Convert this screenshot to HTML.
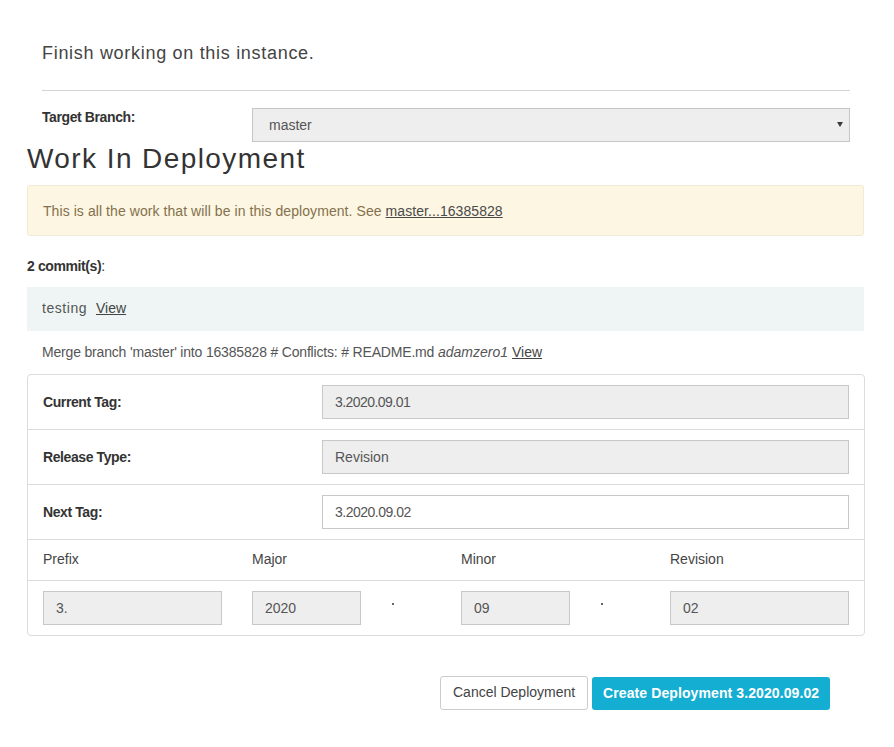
<!DOCTYPE html>
<html>
<head>
<meta charset="utf-8">
<style>
html,body{margin:0;padding:0;background:#fff;}
body{width:894px;height:747px;position:relative;overflow:hidden;font-family:"Liberation Sans",sans-serif;color:#333;}
.a{position:absolute;white-space:nowrap;}
.t14{font-size:14px;}
.lead{left:42px;top:43px;font-size:18px;color:#444;letter-spacing:0.7px;}
.hr{left:42px;top:90px;width:808px;height:1px;background:#d4d4d4;}
.lbl{font-size:14px;font-weight:bold;color:#333;letter-spacing:-0.4px;}
.sel{left:252px;top:108px;width:596px;height:32px;border:1px solid #c6c6c6;background:#eee;}
.sel span{position:absolute;left:16px;top:8px;font-size:14px;color:#555;}
.arrow{left:837px;top:122px;width:0;height:0;border-left:3px solid transparent;border-right:3px solid transparent;border-top:5px solid #3a3a3a;}
.h2{left:27px;top:143px;font-size:28px;color:#333;letter-spacing:1.42px;}
.alert{left:27px;top:185px;width:835px;height:49px;border:1px solid #f1ead6;background:#fdf6e3;border-radius:3px;}
.alert span{position:absolute;left:15px;top:17px;font-size:14px;color:#84714c;letter-spacing:0.07px;}
.alert a{color:#4a4a4a;text-decoration:underline;}
.c1{left:27px;top:287px;width:837px;height:44px;background:#eef5f4;}
a.v{color:#444;text-decoration:underline;}
.g{color:#555;font-size:14px;}
.panel{left:27px;top:374px;width:836px;height:260px;border:1px solid #dcdcdc;border-radius:4px;}
.rowl{left:28px;width:836px;height:1px;background:#dcdcdc;}
.inp{border:1px solid #c8c8c8;background:#eee;height:34px;box-sizing:border-box;}
.inp span{position:absolute;left:12px;top:8px;font-size:14px;color:#555;}
.hd{font-size:14px;color:#444;top:551px;}
.dot{width:2px;height:2px;background:#666;top:603px;}
.btn1{left:440px;top:676px;width:146px;height:32px;border:1px solid #ccc;border-radius:3px;background:#fff;}
.btn1 span{position:absolute;left:12px;top:7px;font-size:14px;color:#444;}
.btn2{left:592px;top:677px;width:238px;height:33px;border-radius:3px;background:#15aed3;}
.btn2 span{position:absolute;left:11px;top:8px;font-size:14px;font-weight:bold;color:#fff;letter-spacing:0.1px;}
</style>
</head>
<body>
<div class="a lead">Finish working on this instance.</div>
<div class="a hr"></div>
<div class="a lbl" style="left:42px;top:109px;">Target Branch:</div>
<div class="a sel"><span>master</span></div>
<div class="a arrow"></div>
<div class="a h2">Work In Deployment</div>
<div class="a alert"><span>This is all the work that will be in this deployment. See <a>master...16385828</a></span></div>
<div class="a lbl" style="left:27px;top:258px;">2 commit(s)<span style="font-weight:normal">:</span></div>
<div class="a c1"></div>
<div class="a g" style="left:42px;top:300px;letter-spacing:0.55px;">testing</div>
<div class="a g" style="left:96px;top:300px;"><a class="v">View</a></div>
<div class="a g" style="left:42px;top:344px;letter-spacing:-0.18px;">Merge branch 'master' into 16385828 # Conflicts: # README.md</div>
<div class="a g" style="left:438px;top:344px;"><i>adamzero1</i></div>
<div class="a g" style="left:512px;top:344px;"><a class="v">View</a></div>

<div class="a panel"></div>
<div class="a rowl" style="top:429px"></div>
<div class="a rowl" style="top:484px"></div>
<div class="a rowl" style="top:539px"></div>
<div class="a rowl" style="top:580px"></div>

<div class="a lbl" style="left:43px;top:394px;">Current Tag:</div>
<div class="a inp" style="left:322px;top:385px;width:527px;"><span style="letter-spacing:-0.55px">3.2020.09.01</span></div>
<div class="a lbl" style="left:43px;top:449px;">Release Type:</div>
<div class="a inp" style="left:322px;top:440px;width:527px;"><span>Revision</span></div>
<div class="a lbl" style="left:43px;top:504px;">Next Tag:</div>
<div class="a inp" style="left:322px;top:495px;width:527px;background:#fff;"><span style="letter-spacing:-0.5px">3.2020.09.02</span></div>

<div class="a hd" style="left:43px;">Prefix</div>
<div class="a hd" style="left:252px;">Major</div>
<div class="a hd" style="left:461px;">Minor</div>
<div class="a hd" style="left:670px;">Revision</div>

<div class="a inp" style="left:43px;top:591px;width:179px;"><span>3.</span></div>
<div class="a inp" style="left:252px;top:591px;width:109px;"><span>2020</span></div>
<div class="a dot" style="left:392px;"></div>
<div class="a inp" style="left:461px;top:591px;width:109px;"><span>09</span></div>
<div class="a dot" style="left:601px;"></div>
<div class="a inp" style="left:670px;top:591px;width:179px;"><span>02</span></div>

<div class="a btn1"><span>Cancel Deployment</span></div>
<div class="a btn2"><span>Create Deployment 3.2020.09.02</span></div>
</body>
</html>
